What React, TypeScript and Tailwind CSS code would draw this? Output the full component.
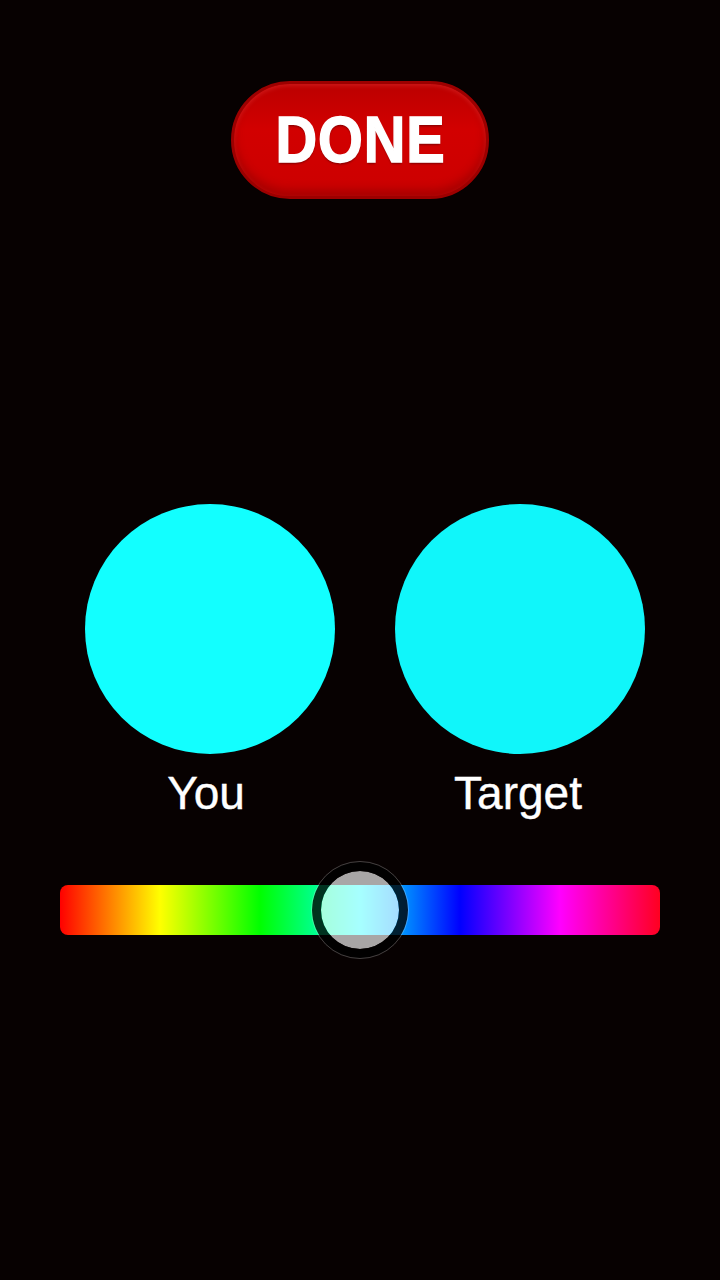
export default function App() {
  return (
    <div className="flex h-[1280px] w-[720px] flex-col items-center bg-[#070101] font-['Liberation_Sans',Arial,sans-serif]">
      <button className="mt-[81px] flex h-[118px] w-[258px] items-center justify-center rounded-full border-[3px] border-[#9c0000] bg-[linear-gradient(180deg,#bb0000_0%,#d20000_40%,#cc0000_100%)] shadow-[inset_0_2px_4px_rgba(255,80,80,0.3),inset_0_-6px_10px_rgba(120,0,0,0.45)]">
        <span className="inline-block scale-x-[0.9] text-[64px] font-bold leading-none tracking-[1px] text-white [-webkit-text-stroke:1.5px_white] [text-shadow:0_2px_2px_rgba(90,0,0,0.6)]">
          DONE
        </span>
      </button>

      <div className="mt-[305px] flex w-full justify-center gap-[60px] pl-[10px]">
        <div className="flex w-[250px] flex-col items-center">
          <div className="h-[250px] w-[250px] rounded-full bg-[#12ffff]" />
          <span className="mt-[11px] -translate-x-[4px] text-[46px] leading-[56px] text-white [-webkit-text-stroke:0.4px_white]">You</span>
        </div>
        <div className="flex w-[250px] flex-col items-center">
          <div className="h-[250px] w-[250px] rounded-full bg-[#10f6fa]" />
          <span className="mt-[11px] -translate-x-[2px] text-[46px] leading-[56px] text-white [-webkit-text-stroke:0.4px_white]">Target</span>
        </div>
      </div>

      <div className="relative mt-[64px] h-[50px] w-[600px]">
        <div className="h-full w-full rounded-[8px] bg-[linear-gradient(90deg,#ff0000_0%,#ffff00_16.67%,#00ff00_33.33%,#00ffff_50%,#0000ff_66.67%,#ff00ff_83.33%,#ff0020_100%)]" />
        <div className="absolute left-[252px] top-[-23px] h-[96px] w-[96px] rounded-full border-[9px] border-black/80 bg-white/65 bg-clip-padding outline outline-1 outline-white/25" />
      </div>
    </div>
  );
}
